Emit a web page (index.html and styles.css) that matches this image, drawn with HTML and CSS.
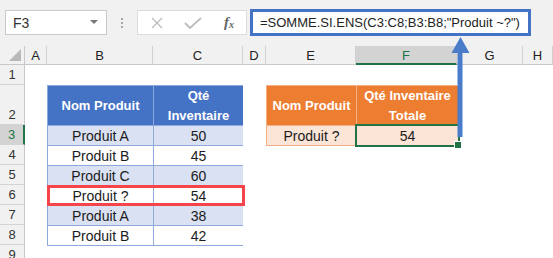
FILE: index.html
```html
<!DOCTYPE html>
<html lang="fr">

<head>
    <meta charset="UTF-8">
    <title>SOMME.SI.ENS - Produit ?</title>
    <link rel="stylesheet" href="styles.css">
</head>

<body>
    <div class="toolbar">
        <div class="name-box">
            <span>F3</span>
            <span class="caret"></span>
        </div>
        <div class="grip"><i></i><i></i><i></i></div>
        <div class="fx-buttons">
            <svg class="btn-cancel" width="14" height="12" viewBox="0 0 14 12">
                <path d="M2 1 L12 11 M12 1 L2 11" stroke="#bdbdbd" stroke-width="1.4" fill="none" />
            </svg>
            <svg class="btn-ok" width="18" height="12" viewBox="0 0 18 12">
                <path d="M1 6 L6 11 L17 1" stroke="#bdbdbd" stroke-width="1.8" fill="none" />
            </svg>
            <span class="fx">f<sub>x</sub></span>
        </div>
        <div class="formula">=SOMME.SI.ENS(C3:C8;B3:B8;"Produit ~?")</div>
    </div>

    <div class="sheet">
        <div class="corner"></div>
        <div class="col-head">A</div>
        <div class="col-head">B</div>
        <div class="col-head">C</div>
        <div class="col-head">D</div>
        <div class="col-head">E</div>
        <div class="col-head active">F</div>
        <div class="col-head">G</div>
        <div class="col-head">H</div>

        <div class="row-head r1">1</div>
        <div class="row-head r2">2</div>
        <div class="row-head r3 active">3</div>
        <div class="row-head r4">4</div>
        <div class="row-head r5">5</div>
        <div class="row-head r6">6</div>
        <div class="row-head r7">7</div>
        <div class="row-head r8">8</div>
        <div class="row-head r9">9</div>

        <div class="tbl stock">
            <div class="th">Nom Produit</div>
            <div class="th">Qté<br>Inventaire</div>
            <div class="td">Produit A</div><div class="td">50</div>
            <div class="td">Produit B</div><div class="td">45</div>
            <div class="td">Produit C</div><div class="td">60</div>
            <div class="td">Produit ?</div><div class="td">54</div>
            <div class="td">Produit A</div><div class="td">38</div>
            <div class="td">Produit B</div><div class="td">42</div>
            <div class="hit-box"></div>
        </div>

        <div class="tbl total">
            <div class="th">Nom Produit</div>
            <div class="th">Qté Inventaire<br>Totale</div>
            <div class="td">Produit ?</div>
            <div class="td selected">54</div>
        </div>
    </div>

    <!-- arrow from the result cell up to the formula -->
    <svg class="arrow" width="553" height="258" viewBox="0 0 553 258">
        <rect x="457.5" y="52" width="5" height="85" fill="#4a7cca" />
        <polygon points="460.5,37 451.5,53 469.5,53" fill="#4a7cca" />
    </svg>
</body>

</html>
```

FILE: styles.css
```css
* {
    margin: 0;
    box-sizing: border-box;
}

body {
    width: 553px;
    height: 258px;
    overflow: hidden;
    position: relative;
    background: #ffffff;
    font-family: "Liberation Sans", Arial, sans-serif;
    color: #1b1b1b;
}

/* formula bar */
.toolbar {
    height: 46px;
    background: #f1f1f1;
    display: flex;
    align-items: flex-start;
    padding: 10px 0 0 5px;
}

.name-box {
    width: 102px;
    height: 25px;
    background: #fff;
    border: 1px solid #c8c8c8;
    display: flex;
    align-items: center;
    justify-content: space-between;
    padding: 0 8px 0 7px;
    font-size: 14px;
    color: #333;
}

.caret {
    border-left: 4px solid transparent;
    border-right: 4px solid transparent;
    border-top: 4px solid #777;
    margin-top: -1px;
}

.grip {
    width: 30px;
    height: 25px;
    display: flex;
    flex-direction: column;
    align-items: center;
    justify-content: center;
    gap: 2px;
}

.grip i {
    width: 2px;
    height: 2px;
    background: #a8a8a8;
}

.fx-buttons {
    width: 110px;
    height: 25px;
    background: #fff;
    border: 1px solid #dcdcdc;
    display: flex;
    align-items: center;
    padding-left: 12px;
}

.btn-ok {
    margin-left: 20px;
}

.fx {
    margin-left: 22px;
    font-family: "Liberation Serif", serif;
    font-style: italic;
    font-weight: bold;
    font-size: 15px;
    color: #666;
}

.fx sub {
    font-size: 10px;
    vertical-align: -1px;
}

.formula {
    width: 281px;
    height: 27px;
    margin: -1px 0 0 3px;
    background: #fff;
    border: 3px solid #4472c4;
    font-size: 13px;
    line-height: 21px;
    padding-left: 7px;
    color: #222;
    white-space: nowrap;
}

/* grid */
.sheet {
    display: grid;
    grid-template-columns: 25px 22px 106px 90px 23px 90px 101px 66px 1fr;
    grid-template-rows: 19px 20px 40px repeat(7, 20px);
}

.corner {
    background: #f1f1f1;
    border-right: 1px solid #c8c8c8;
    border-bottom: 1px solid #c8c8c8;
    position: relative;
}

.corner::after {
    content: "";
    position: absolute;
    right: 3px;
    bottom: 3px;
    border-left: 12px solid transparent;
    border-bottom: 12px solid #b8b8b8;
}

.col-head {
    background: #f1f1f1;
    border-right: 1px solid #d0d0d0;
    border-bottom: 1px solid #c8c8c8;
    font-size: 13px;
    color: #222;
    display: flex;
    align-items: center;
    justify-content: center;
    padding-top: 1px;
}

.col-head.active {
    background: #d3d3d3;
    color: #217346;
    border-bottom: 2px solid #217346;
}

.row-head {
    grid-column: 1;
    background: #f1f1f1;
    border-right: 1px solid #c8c8c8;
    border-bottom: 1px solid #d4d4d4;
    font-size: 13px;
    color: #333;
    display: flex;
    align-items: flex-end;
    justify-content: center;
    padding-bottom: 2px;
}

.row-head.active {
    background: #d3d3d3;
    color: #217346;
    border-right: 2px solid #217346;
}

/* tables */
.tbl {
    display: grid;
    gap: 1px;
    padding: 1px;
    align-self: start;
    position: relative;
}

.th,
.td {
    display: flex;
    align-items: center;
    justify-content: center;
    text-align: center;
    font-size: 14px;
}

.th {
    color: #fff;
    font-weight: bold;
    font-size: 13px;
    line-height: 20px;
}

.stock {
    grid-column: 3 / 5;
    grid-row: 3 / 10;
    grid-template-columns: 105px 89px;
    grid-template-rows: 39px repeat(6, 19px);
    background: #8ea9db;
}

.stock .th {
    background: #4472c4;
}

.stock .td {
    background: #fff;
}

.stock .td:nth-child(4n+3),
.stock .td:nth-child(4n+4) {
    background: #d9e1f2;
}

.hit-box {
    position: absolute;
    left: 0;
    top: 100px;
    width: 198px;
    height: 21px;
    border: 3px solid #f5454b;
}

.total {
    grid-column: 6 / 8;
    grid-row: 3 / 5;
    grid-template-columns: 89px 101px;
    grid-template-rows: 39px 19px;
    background: #f4b084;
}

.total .th {
    background: #ed7d31;
}

.total .td {
    background: #fce4d6;
}

.td.selected {
    position: relative;
    outline: 2px solid #217346;
}

.td.selected::after {
    content: "";
    position: absolute;
    right: -4px;
    bottom: -4px;
    width: 6px;
    height: 6px;
    background: #217346;
    border: 1px solid #fff;
}

.arrow {
    position: absolute;
    left: 0;
    top: 0;
    pointer-events: none;
}
```
